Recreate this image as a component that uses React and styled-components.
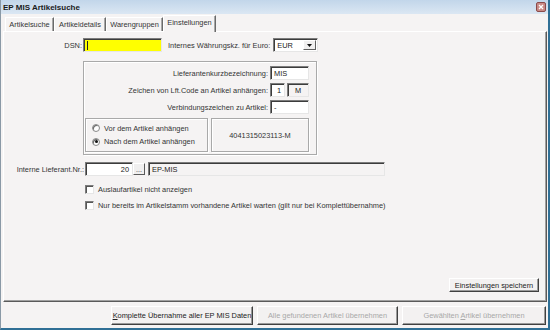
import React from 'react';
import styled, { createGlobalStyle } from 'styled-components';

const GlobalStyle = createGlobalStyle`
  html, body { margin: 0; padding: 0; background: #f5f3f3; }
  * { box-sizing: border-box; }
`;

const FONT = `'Liberation Sans', Arial, sans-serif`;

const Window = styled.div`
  width: 550px;
  height: 330px;
  display: flex;
  flex-direction: column;
  background: #f5f3f3;
  border-left: 1px solid #8a99a6;
  border-right: 2px solid #2f6f95;
  border-bottom: 2px solid #2f6f95;
  font-family: ${FONT};
  font-size: 7.4px;
  color: #333333;
`;

const TitleBar = styled.div`
  height: 14px;
  display: flex;
  align-items: center;
  justify-content: space-between;
  padding: 0 2px 0 2px;
  background: linear-gradient(#c2d6ea, #dbe7f3);
  font-weight: bold;
  font-size: 8px;
  color: #1a1a1a;
`;

const CloseBox = styled.div`
  width: 10px;
  height: 10px;
  border-radius: 2px;
  border: 1px solid #8a4a4a;
  background: #c98a86;
  display: flex;
  align-items: center;
  justify-content: center;
`;

const TabStrip = styled.div`
  height: 17px;
  display: flex;
  align-items: flex-end;
  padding-left: 4px;
  position: relative;
  z-index: 1;
`;

const Tab = styled.div`
  width: ${p => p.w}px;
  height: ${p => (p.active ? 17 : 14)}px;
  margin-bottom: ${p => (p.active ? -1 : 0)}px;
  display: flex;
  align-items: center;
  justify-content: center;
  background: #f5f3f3;
  border-top: 1px solid #ffffff;
  border-left: 1px solid #ffffff;
  border-right: 1px solid #6a6a6a;
  box-shadow: inset -1px 0 0 #a8a8a8;
  padding-bottom: ${p => (p.active ? 3 : 0)}px;
`;

const Panel = styled.div`
  height: 271px;
  margin: 0 1px 0 2px;
  display: flex;
  flex-direction: column;
  border-top: 1px solid #ffffff;
  border-left: 1px solid #ffffff;
  border-right: 1px solid #5a5a5a;
  border-bottom: 1px solid #5a5a5a;
  box-shadow: inset -1px -1px 0 #a0a0a0;
`;

const Row = styled.div`
  display: flex;
  align-items: center;
  height: ${p => p.h || 14}px;
  margin-top: ${p => p.mt || 0}px;
  margin-left: ${p => p.ml || 0}px;
`;

const Label = styled.div`
  width: ${p => p.w || 79}px;
  text-align: right;
  padding-right: ${p => p.pr ?? 1}px;
  white-space: nowrap;
`;

const Input = styled.div`
  width: ${p => p.w}px;
  height: ${p => p.h || 14}px;
  margin-left: ${p => p.ml || 0}px;
  background: ${p => p.bg || '#ffffff'};
  border: 1px solid;
  border-color: #7c7c7c #e6e6e6 #e6e6e6 #7c7c7c;
  box-shadow: inset 1px 1px 0 #3c3c3c;
  display: flex;
  align-items: center;
  justify-content: ${p => p.align || 'flex-start'};
  padding: 0 3px;
  white-space: nowrap;
  color: #222;
`;

const Caret = styled.span`
  width: 1px;
  height: 9px;
  background: #222;
`;

const DropButton = styled.div`
  width: 13px;
  height: 10px;
  margin-left: auto;
  margin-right: -2px;
  background: #f0efef;
  border: 1px solid;
  border-color: #ffffff #606060 #606060 #ffffff;
  display: flex;
  align-items: center;
  justify-content: center;
`;

const InlineText = styled.span`
  margin-left: ${p => p.ml || 0}px;
  white-space: nowrap;
`;

const GroupBox = styled.div`
  width: 234px;
  height: 94px;
  margin: 9px 0 0 79px;
  border: 1px solid #a9a9a9;
  box-shadow: inset 1px 1px 0 #ffffff, 1px 1px 0 #ffffff;
  padding: 4px 7px 0 1px;
  display: flex;
  flex-direction: column;
`;

const FieldRow = styled.div`
  display: flex;
  justify-content: flex-end;
  align-items: center;
  gap: 2px;
  height: 14px;
  margin-bottom: 3px;
`;

const BoxRow = styled.div`
  display: flex;
  gap: 3px;
  margin-top: 1px;
`;

const Frame = styled.div`
  width: ${p => p.w}px;
  height: 34px;
  border: 1px solid #a9a9a9;
  box-shadow: inset 1px 1px 0 #ffffff, 1px 1px 0 #ffffff;
  display: flex;
  flex-direction: column;
  justify-content: ${p => (p.center ? 'center' : 'space-evenly')};
  align-items: ${p => (p.center ? 'center' : 'flex-start')};
  padding-left: ${p => (p.center ? 0 : 6)}px;
`;

const Option = styled.div`
  display: flex;
  align-items: center;
  gap: 4px;
`;

const RadioDot = styled.span`
  width: 8px;
  height: 8px;
  border-radius: 50%;
  background: #ffffff;
  border: 1px solid #8a8a8a;
  box-shadow: inset 1px 1px 0 #666;
  display: flex;
  align-items: center;
  justify-content: center;
  &::after {
    content: '';
    width: 3px;
    height: 3px;
    border-radius: 50%;
    background: ${p => (p.on ? '#111' : 'transparent')};
  }
`;

const SmallButton = styled.div`
  width: 12px;
  height: 12px;
  background: #f0efef;
  border: 1px solid;
  border-color: #ffffff #5a5a5a #5a5a5a #ffffff;
  display: flex;
  align-items: flex-end;
  justify-content: center;
  font-size: 7px;
  line-height: 8px;
`;

const CheckRow = styled.div`
  display: flex;
  align-items: center;
  gap: 4px;
  height: 9px;
  margin: ${p => p.mt}px 0 0 81px;
`;

const CheckBox = styled.span`
  width: 9px;
  height: 9px;
  background: #ffffff;
  border: 1px solid;
  border-color: #7c7c7c #e6e6e6 #e6e6e6 #7c7c7c;
  box-shadow: inset 1px 1px 0 #555;
`;

const Spacer = styled.div`
  flex: 1;
`;

const Button = styled.div`
  width: ${p => p.w}px;
  height: ${p => p.h}px;
  margin-left: ${p => p.ml || 0}px;
  background: #f3f1f1;
  border: 1px solid;
  border-color: #ffffff #404040 #404040 #ffffff;
  box-shadow: inset -1px -1px 0 #9a9a9a;
  display: flex;
  align-items: center;
  justify-content: center;
  white-space: nowrap;
  color: ${p => (p.disabled ? '#a8a8a8' : '#222')};
`;

const SaveRow = styled.div`
  display: flex;
  justify-content: flex-end;
  padding: 0 7px 9px 0;
`;

const Footer = styled.div`
  display: flex;
  padding: 4px 0 0 110px;
`;

function App() {
  return (
    <>
      <GlobalStyle />
      <Window>
        <TitleBar>
          <span>EP MIS Artikelsuche</span>
          <CloseBox>
            <svg width="6" height="6" viewBox="0 0 6 6">
              <path d="M1 1L5 5M5 1L1 5" stroke="#fff" strokeWidth="1.3" />
            </svg>
          </CloseBox>
        </TitleBar>

        <TabStrip>
          <Tab w={49}>Artikelsuche</Tab>
          <Tab w={52}>Artikeldetails</Tab>
          <Tab w={57}>Warengruppen</Tab>
          <Tab w={53} active>Einstellungen</Tab>
        </TabStrip>

        <Panel>
          <Row mt={6}>
            <Label w={79}>DSN:</Label>
            <Input w={79} bg="#ffff00"><Caret /></Input>
            <InlineText ml={6}>Internes Währungskz. für Euro:</InlineText>
            <Input w={45} ml={3}>
              EUR
              <DropButton>
                <svg width="5" height="3" viewBox="0 0 5 3"><path d="M0 0H5L2.5 3Z" fill="#111" /></svg>
              </DropButton>
            </Input>
          </Row>

          <GroupBox>
            <FieldRow>
              <span>Lieferantenkurzbezeichnung:</span>
              <Input w={39}>MIS</Input>
            </FieldRow>
            <FieldRow>
              <span>Zeichen von Lft.Code an Artikel anhängen:</span>
              <Input w={15} align="flex-end">1</Input>
              <Input w={22} align="center" bg="#f5f3f3">M</Input>
            </FieldRow>
            <FieldRow>
              <span>Verbindungszeichen zu Artikel:</span>
              <Input w={39}>-</Input>
            </FieldRow>
            <BoxRow>
              <Frame w={124}>
                <Option><RadioDot />Vor dem Artikel anhängen</Option>
                <Option><RadioDot on />Nach dem Artikel anhängen</Option>
              </Frame>
              <Frame w={99} center>4041315023113-M</Frame>
            </BoxRow>
          </GroupBox>

          <Row mt={7}>
            <Label w={81}>Interne Lieferant.Nr.:</Label>
            <Input w={48} align="flex-end">20</Input>
            <SmallButton>...</SmallButton>
            <Input w={237} ml={3} bg="#f5f3f3">EP-MIS</Input>
          </Row>

          <CheckRow mt={9}>
            <CheckBox />
            <span>Auslaufartikel nicht anzeigen</span>
          </CheckRow>
          <CheckRow mt={7}>
            <CheckBox />
            <span>Nur bereits im Artikelstamm vorhandene Artikel warten (gilt nur bei Komplettübernahme)</span>
          </CheckRow>

          <Spacer />
          <SaveRow>
            <Button w={90} h={14}>Einstellungen speichern</Button>
          </SaveRow>
        </Panel>

        <Footer>
          <Button w={142} h={19}><span><u>K</u>omplette Übernahme aller EP MIS Daten</span></Button>
          <Button w={141} h={19} ml={4} disabled>Alle gefundenen Artikel übernehmen</Button>
          <Button w={144} h={19} ml={4} disabled><span>Gewählten <u>A</u>rtikel übernehmen</span></Button>
        </Footer>
      </Window>
    </>
  );
}

export default App;
